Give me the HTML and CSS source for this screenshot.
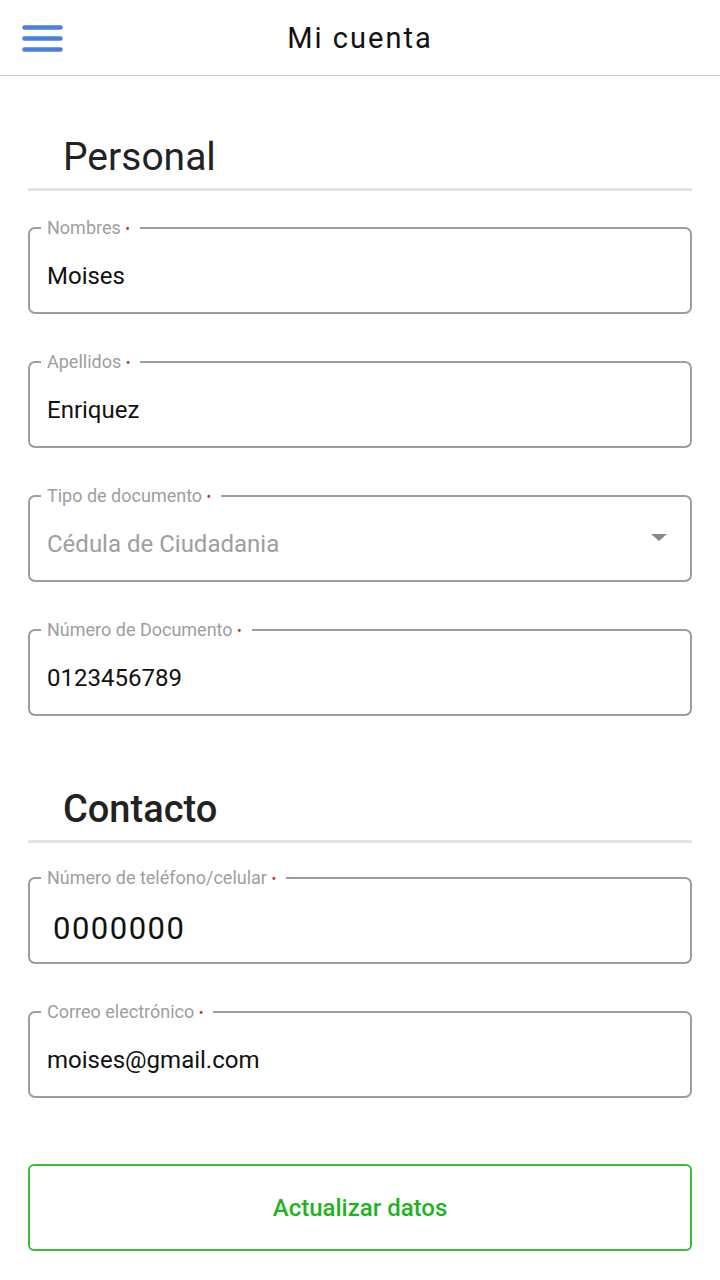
FILE: index.html
```html
<!DOCTYPE html>
<html lang="es">
<head>
    <meta charset="UTF-8">
    <meta name="viewport" content="width=device-width, initial-scale=1.0">
    <title>Mi cuenta</title>
    <link rel="stylesheet" href="styles.css">
</head>
<body>
    <header class="topbar">
        <button class="menu-btn" type="button" aria-label="Menú">
            <svg width="48" height="30" viewBox="0 0 48 30">
                <path d="M6.5 4.5H42.5M6.5 15.5H42.5M6.5 26.5H42.5" stroke="#4a80dc" stroke-width="4.5" stroke-linecap="round" fill="none"/>
            </svg>
        </button>
        <h1 class="topbar-title">Mi cuenta</h1>
        <span></span>
    </header>

    <main class="content">
        <form id="account-form">
            <section class="form-section">
                <h2 class="section-title section-title--light">Personal</h2>

                <fieldset class="field">
                    <legend class="field-label">Nombres <span class="req">•</span></legend>
                    <div class="field-value">Moises</div>
                </fieldset>

                <fieldset class="field">
                    <legend class="field-label">Apellidos <span class="req">•</span></legend>
                    <div class="field-value">Enriquez</div>
                </fieldset>

                <fieldset class="field">
                    <legend class="field-label">Tipo de documento <span class="req">•</span></legend>
                    <div class="field-value field-select">
                        <span class="placeholder">Cédula de Ciudadania</span>
                        <span class="caret"></span>
                    </div>
                </fieldset>

                <fieldset class="field">
                    <legend class="field-label">Número de Documento <span class="req">•</span></legend>
                    <div class="field-value">0123456789</div>
                </fieldset>
            </section>

            <section class="form-section">
                <h2 class="section-title">Contacto</h2>

                <fieldset class="field">
                    <legend class="field-label">Número de teléfono/celular <span class="req">•</span></legend>
                    <div class="field-value field-phone">0000000</div>
                </fieldset>

                <fieldset class="field">
                    <legend class="field-label">Correo electrónico <span class="req">•</span></legend>
                    <div class="field-value">moises@gmail.com</div>
                </fieldset>
            </section>

            <button class="submit-btn" type="submit">Actualizar datos</button>
        </form>
    </main>
</body>
</html>
```

FILE: styles.css
```css
body {
    margin: 0;
    font-family: Roboto, "Noto Sans", Arial, sans-serif;
    background-color: #fff;
    color: #111;
}

.topbar {
    display: grid;
    grid-template-columns: 1fr auto 1fr;
    align-items: center;
    height: 75px;
    border-bottom: 1px solid #c9c9c9;
    padding: 0 18px;
}

.menu-btn {
    justify-self: start;
    display: flex;
    padding: 0;
    border: none;
    background: none;
    cursor: pointer;
}

.topbar-title {
    margin: 0;
    font-size: 29px;
    font-weight: 400;
    letter-spacing: 2px;
    color: #111;
}

.content {
    padding: 58px 28px 0;
}

.form-section {
    margin-bottom: 70px;
}

.form-section:last-of-type {
    margin-bottom: 66px;
}

.section-title {
    margin: 0 0 25px;
    padding: 0 0 8px 35px;
    font-size: 38px;
    line-height: 46px;
    font-weight: 500;
    color: #222;
    border-bottom: 3px solid #e3e3e3;
}

.section-title--light {
    margin-bottom: 27px;
    font-size: 39px;
    font-weight: 400;
}

.field {
    margin: 0 0 38px;
    padding: 0 17px;
    border: 2px solid #9d9d9d;
    border-radius: 7px;
    min-width: 0;
}

.field:last-child {
    margin-bottom: 0;
}

.field-label {
    margin-left: -6px;
    padding: 0 10px 0 6px;
    font-size: 18px;
    line-height: 20px;
    color: #9e9e9e;
}

.req {
    font-size: 14px;
    line-height: 0;
    color: #c0392b;
}

.field-value {
    padding: 24px 0 22px;
    font-size: 24px;
    line-height: 28px;
    color: #111;
}

.field-select {
    display: flex;
    justify-content: space-between;
    align-items: center;
    padding-right: 6px;
}

.placeholder {
    color: #9e9e9e;
}

.caret {
    width: 0;
    height: 0;
    border-left: 8px solid transparent;
    border-right: 8px solid transparent;
    border-top: 7px solid #8a8a8a;
    margin-top: -14px;
}

.field-phone {
    padding: 27px 0 19px 6px;
    font-size: 31px;
    letter-spacing: 1.5px;
}

.submit-btn {
    display: block;
    width: 100%;
    height: 87px;
    border: 2px solid #3cbb3c;
    border-radius: 6px;
    background-color: #fff;
    font-family: Roboto, Arial, sans-serif;
    font-size: 24px;
    font-weight: 500;
    color: #1fb41f;
    cursor: pointer;
}
```
